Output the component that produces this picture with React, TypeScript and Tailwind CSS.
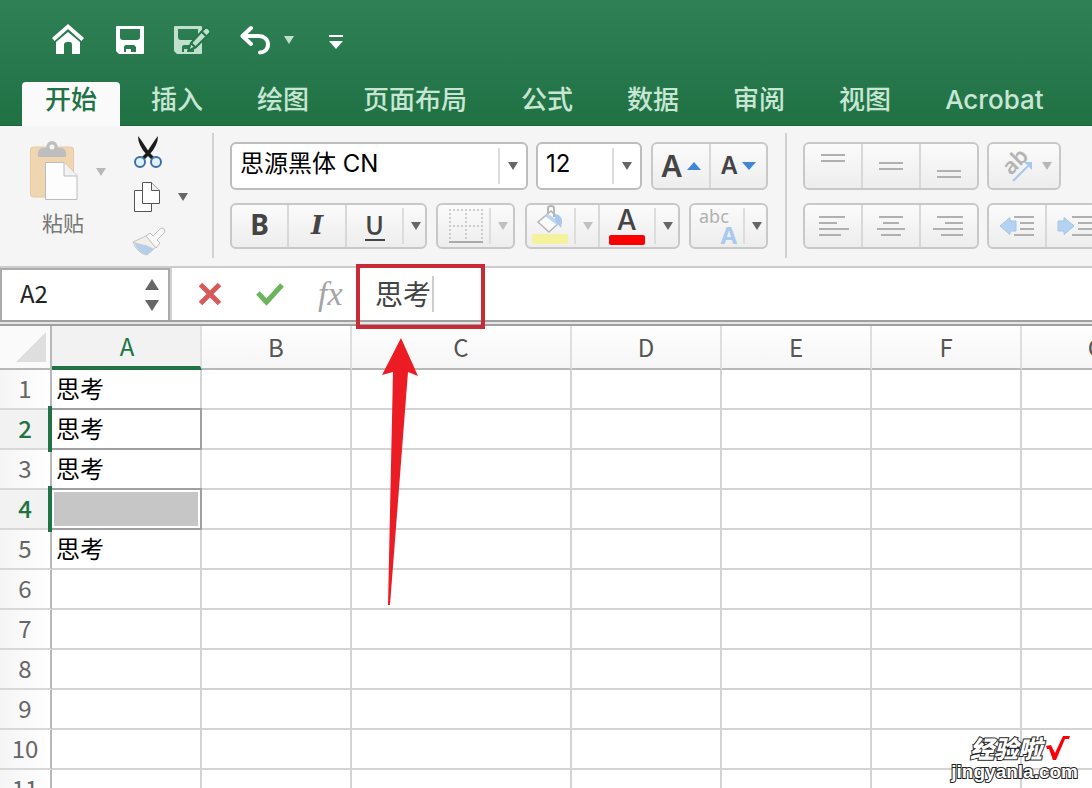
import { useState } from 'react';
import type { ReactNode } from 'react';

const tabs = ['开始', '插入', '绘图', '页面布局', '公式', '数据', '审阅', '视图', 'Acrobat'];

const columns = [
  { name: 'A', width: 150 },
  { name: 'B', width: 150 },
  { name: 'C', width: 220 },
  { name: 'D', width: 150 },
  { name: 'E', width: 150 },
  { name: 'F', width: 150 },
  { name: 'G', width: 150 },
];

const rows = [1, 2, 3, 4, 5, 6, 7, 8, 9, 10, 11];

const cells: Record<string, string> = { A1: '思考', A2: '思考', A3: '思考', A5: '思考' };

function Caret({ className = 'text-[#666666]' }: { className?: string }) {
  return (
    <svg width="10" height="8" viewBox="0 0 10 8" className={className} fill="currentColor">
      <path d="M0 0h10L5 8z" />
    </svg>
  );
}

function Separator() {
  return <span className="w-0.5 h-9 bg-[#dddddd]" />;
}

function Group({ children, className = '' }: { children: ReactNode; className?: string }) {
  return (
    <div
      className={`flex shrink-0 items-stretch rounded-md border-2 border-[#c8c8c8] bg-linear-to-b from-[#fbfbfb] to-[#ededed] ${className}`}
    >
      {children}
    </div>
  );
}

function Tool({
  label,
  children,
  className = '',
}: {
  label: string;
  children: ReactNode;
  className?: string;
}) {
  return (
    <button
      type="button"
      aria-label={label}
      title={label}
      className={`flex items-center justify-center ${className}`}
    >
      {children}
    </button>
  );
}

function Drop({ label, muted = false, className = 'flex-1' }: { label: string; muted?: boolean; className?: string }) {
  return (
    <button type="button" aria-label={label} title={label} className={`flex items-center gap-[7px] ${className}`}>
      <Separator />
      <Caret className={muted ? 'text-[#c0c0c0]' : 'text-[#666666]'} />
    </button>
  );
}

// each line is [x, width]
function Lines({ lines, top }: { lines: number[][]; top: number }) {
  return (
    <svg width="32" height="36" viewBox="0 0 32 36" fill="#b0b0b0">
      {lines.map(([x, width], i) => (
        <rect key={i} x={x} y={top + i * 6} width={width} height="2" />
      ))}
    </svg>
  );
}

function Indent({ right = false }: { right?: boolean }) {
  return (
    <svg width="36" height="24" viewBox="0 0 36 24">
      <g fill="#b0b0b0">
        <rect x="15" y="2" width="20" height="2" />
        <rect x="21" y="8" width="14" height="2" />
        <rect x="21" y="14" width="14" height="2" />
        <rect x="15" y="20" width="20" height="2" />
      </g>
      <path
        d={right ? 'M1 7h6V3.500l10 8.500-10 8.500V17H1z' : 'M17 7h-6V3.500L1 12l10 8.500V17h6z'}
        fill="#b5d2f2"
        stroke="#a3c3e8"
      />
    </svg>
  );
}

function Header() {
  const [active, setActive] = useState('开始');

  return (
    <header className="bg-linear-to-b from-[#308056] to-[#217346] to-90% border-b border-[#1d6039]">
      <div className="flex items-center gap-[30px] h-20 pl-[50px] text-white">
        <Tool label="主页" className="w-[34px]">
          <svg width="34" height="32" viewBox="0 0 34 32" fill="currentColor">
            <path d="M18 0 34 14l-2.600 3L18 5 4.600 17 2 14z" />
            <path d="M18 8 30 18v11.500q0 .5-.5.5H22V21q0-3-2-3h-3q-3 0-3 3v9H6.500q-.5 0-.5-.5V18z" />
          </svg>
        </Tool>
        <Tool label="保存" className="w-[30px] pl-0.5">
          <svg width="28" height="28" viewBox="0 0 28 28" fill="currentColor">
            <path
              d="M1 0h26q1 0 1 1v26q0 1-1 1H3l-3-3V1q0-1 1-1zM4 3v8q0 3 3 3h14q3 0 3-3V3zM8 26h2v-3h5v3h5v-5l-2-2h-8q-2 0-2 2z"
              fillRule="evenodd"
            />
          </svg>
        </Tool>
        <Tool label="另存为" className="w-9 text-[#bfe0cd]">
          <svg width="36" height="30" viewBox="0 0 36 30">
            <path
              d="M1 1h26q1 0 1 1v26q0 1-1 1H3l-3-3V2q0-1 1-1zM4 4v8q0 3 3 3h14q3 0 3-3V4zM8 27h2v-3h4v3h6v-5l-2-2h-8q-2 0-2 2z"
              fill="currentColor"
              fillRule="evenodd"
            />
            <path
              d="M14 26 17 18 31 3q2-1 4 1t1 4L22 22z"
              fill="currentColor"
              stroke="#26764a"
              strokeWidth="2"
              strokeLinejoin="round"
            />
            <path d="m27 6 5 5M17 18l5 5" stroke="#26764a" strokeWidth="2" />
          </svg>
        </Tool>
        <div className="flex items-center gap-3.5">
          <Tool label="撤消">
            <svg width="30" height="30" viewBox="0 0 30 30" fill="none" stroke="currentColor" strokeWidth="4">
              <path d="M11 3 2.500 11l8.500 8" strokeLinecap="round" strokeLinejoin="round" />
              <path d="M3 11h16c5 0 9 3.500 9 8.500s-4 8-8 8" strokeLinecap="round" />
            </svg>
          </Tool>
          <Tool label="撤消选项">
            <Caret className="text-[#bfe0cd]" />
          </Tool>
        </div>
        <Tool label="自定义快速访问工具栏" className="ml-1">
          <svg width="16" height="16" viewBox="0 0 16 16" fill="currentColor" className="mt-1">
            <path d="M1 1h14v2H1zM1 7h14L8 15z" />
          </svg>
        </Tool>
      </div>
      <nav className="flex gap-2 -mb-px pl-[22px] pt-0.5 text-[26px] leading-9 font-medium font-[Inter,'Noto_Sans_CJK_SC',sans-serif]">
        {tabs.map((tab) => (
          <button
            key={tab}
            type="button"
            onClick={() => setActive(tab)}
            className={`h-11 shrink-0 px-[23px] pb-2 rounded-t whitespace-nowrap ${
              tab === active ? 'bg-[#fafafa] text-[#217346]' : 'text-[#c8e6d4]'
            }`}
          >
            {tab}
          </button>
        ))}
      </nav>
    </header>
  );
}

function Clipboard() {
  return (
    <div className="flex shrink-0 w-[212px] h-full pl-[30px]">
      <div className="flex flex-col w-[76px] pt-3.5">
        <button type="button" className="flex items-start justify-between w-full" aria-label="粘贴">
          <svg width="50" height="62" viewBox="0 0 50 62">
            <rect x="0.500" y="7" width="43" height="50" rx="3" fill="#f0d6b0" stroke="#e3c9a4" />
            <path d="M8 17v-4q0-5 6-5h2q1-7 6-7t6 7h2q6 0 6 5v4z" fill="#bebebe" />
            <circle cx="22" cy="7" r="2.500" fill="#f5f5f5" />
            <path d="M15.500 22.500H34l13 13v24H15.500z" fill="#fdfdfd" stroke="#bcbcbc" />
            <path d="M34 22.500V36h13" fill="#f3f3f3" stroke="#bcbcbc" />
          </svg>
          <span className="pt-7">
            <Caret className="text-[#b8b8b8]" />
          </span>
        </button>
        <span className="pl-3 pt-1 text-[21px] leading-8 whitespace-nowrap text-[#777777]">粘贴</span>
      </div>
      <div className="flex flex-col items-start pl-[26px] pt-2">
        <Tool label="剪切" className="h-9">
          <svg width="32" height="34" viewBox="0 0 32 34">
            <path d="M6 1q2 2 11 16l6 6-2 3-7-7Q6 10 6 1z" fill="#1c1c1c" />
            <path d="M26 1q-2 2-11 16l-6 6 2 3 7-7Q26 10 26 1z" fill="#1c1c1c" />
            <circle cx="8" cy="27" r="5" fill="#dff1fd" stroke="#3d6fa8" strokeWidth="2" />
            <circle cx="24" cy="27" r="5" fill="#dff1fd" stroke="#3d6fa8" strokeWidth="2" />
          </svg>
        </Tool>
        <div className="flex items-center gap-4 h-[54px]">
          <Tool label="复制">
            <svg width="30" height="32" viewBox="0 0 30 32" stroke="#555555">
              <path d="M2.500 9.500h17v21h-17z" fill="#ffffff" />
              <path d="M10.500 1.500h9l8 8v13h-17z" fill="#ffffff" />
              <path d="M19.500 1.500v8h8" fill="#eeeeee" />
            </svg>
          </Tool>
          <Tool label="复制选项">
            <Caret />
          </Tool>
        </div>
        <Tool label="格式刷" className="h-9">
          <svg width="34" height="30" viewBox="0 0 34 30">
            <path d="M14 9 1 15c2 6 7 12 14 13l10-9z" fill="#f4eee6" stroke="#c4c4c4" />
            <path d="M2 15q8 3 12 3l8 4-7 6Q6 26 2 15z" fill="#b4cde8" />
            <path d="M14 9 18 6l3 3 7-7q2-2 4 0t0 4l-7 7 3 3-4 5z" fill="#f8f8f8" stroke="#bebebe" />
          </svg>
        </Tool>
      </div>
    </div>
  );
}

function FontTools() {
  return (
    <div className="flex flex-col shrink-0 gap-[13px] pl-4 pr-[17px]">
      <div className="flex h-12">
        <div className="relative flex items-center w-[298px] rounded-md border-2 border-[#bdbdbd] bg-white">
          <select
            aria-label="字体"
            defaultValue="cn"
            className="appearance-none w-full h-full pl-2 pb-1 text-2xl leading-8 font-[Inter,'Noto_Sans_CJK_SC',sans-serif] text-black bg-transparent"
          >
            <option value="cn">思源黑体 CN</option>
          </select>
          <span className="absolute right-2 flex items-center gap-2 pointer-events-none">
            <Separator />
            <Caret />
          </span>
        </div>
        <div className="relative flex items-center w-[106px] ml-2 rounded-md border-2 border-[#bdbdbd] bg-white">
          <select
            aria-label="字号"
            defaultValue="12"
            className="appearance-none w-full h-full pl-2 pb-1 text-2xl leading-8 font-[Inter,sans-serif] text-black bg-transparent"
          >
            <option value="12">12</option>
          </select>
          <span className="absolute right-2 flex items-center gap-2 pointer-events-none">
            <Separator />
            <Caret />
          </span>
        </div>
        <Group className="w-[117px] ml-[9px] divide-x-2 divide-[#d8d8d8] text-[#444444] font-semibold font-[Inter,sans-serif]">
          <Tool label="增大字号" className="flex-1 gap-1">
            <span className="text-[30px] leading-10">A</span>
            <svg width="14" height="8" viewBox="0 0 14 8">
              <path d="M0 8h14L7 0z" fill="#3f86d4" />
            </svg>
          </Tool>
          <Tool label="减小字号" className="flex-1 gap-1">
            <span className="text-2xl leading-10">A</span>
            <svg width="14" height="8" viewBox="0 0 14 8">
              <path d="M0 0h14L7 8z" fill="#3f86d4" />
            </svg>
          </Tool>
        </Group>
      </div>
      <div className="flex justify-between h-[46px]">
        <Group className="w-[197px] text-[#444444] text-[26px] leading-9">
          <Tool
            label="加粗"
            className="w-[57px] pb-1 text-[28px] font-bold font-['Noto_Sans',sans-serif] border-r-2 border-[#d8d8d8]"
          >
            B
          </Tool>
          <Tool
            label="倾斜"
            className="w-[58px] pb-0.5 font-bold italic font-['DejaVu_Serif',serif] border-r-2 border-[#d8d8d8]"
          >
            I
          </Tool>
          <Tool label="下划线" className="w-[55px] pb-0.5">
            <span className="w-5 h-8 border-b-2 border-[#444444] font-medium leading-[30px]">U</span>
          </Tool>
          <Drop label="下划线选项" />
        </Group>
        <Group className="w-[79px]">
          <Tool label="边框" className="w-[51px] pl-1">
            <svg width="36" height="36" viewBox="0 0 36 36" fill="none" stroke="#cccccc" strokeWidth="2">
              <path d="M1 2h34M1 18h34M2 1v31M18 1v31M34 1v31" strokeDasharray="2 2" />
              <path d="M1 34h34" stroke="#aaaaaa" />
            </svg>
          </Tool>
          <Drop label="边框选项" muted />
        </Group>
        <Group className="w-[155px]">
          <Tool label="填充颜色" className="w-[47px] pb-0.5">
            <svg width="38" height="40" viewBox="0 0 38 40">
              <rect x="1" y="29" width="36" height="10" rx="2" fill="#f4f29c" />
              <path d="M20 6 7 17l11 10 12-11z" fill="#fafafa" stroke="#b5b5b5" strokeWidth="1.500" />
              <path d="m14 11 3-2 12 8-3 3z" fill="#bcd5f0" />
              <path d="M23 9q8 0 8 8l-1 6-5-6z" fill="#a9c8ec" />
              <path d="M17 8V3q0-2 3-2t3 2v9" fill="none" stroke="#b5b5b5" strokeWidth="2" />
            </svg>
          </Tool>
          <Drop label="填充颜色选项" muted className="w-[26px] border-r-2 border-[#d8d8d8]" />
          <Tool label="字体颜色" className="w-[54px] flex-col pb-0.5">
            <span className="text-[28px] leading-[30px] font-medium font-[Inter,sans-serif] text-[#444444]">A</span>
            <span className="w-9 h-2.5 rounded-xs bg-[#fa0000]" />
          </Tool>
          <Drop label="字体颜色选项" />
        </Group>
        <Group className="w-[79px]">
          <Tool label="文本效果" className="w-[52px] flex-col">
            <span className="w-full pl-2 text-left text-lg leading-[22px] text-[#b0b0b0] font-['Noto_Sans',sans-serif]">
              abc
            </span>
            <span className="w-full pr-1.5 h-5 text-right text-2xl leading-4 font-bold font-['Noto_Sans',sans-serif] text-[#aac9ee]">
              A
            </span>
          </Tool>
          <Drop label="文本效果选项" />
        </Group>
      </div>
    </div>
  );
}

function AlignTools() {
  return (
    <div className="flex flex-col shrink-0 gap-[13px] pl-4">
      <div className="flex gap-2 h-12">
        <Group className="w-[176px] divide-x-2 divide-[#d8d8d8]">
          <Tool label="顶端对齐" className="flex-1">
            <Lines top={6} lines={[[4, 24], [4, 24]]} />
          </Tool>
          <Tool label="垂直居中" className="flex-1">
            <Lines top={14} lines={[[4, 24], [4, 24]]} />
          </Tool>
          <Tool label="底端对齐" className="flex-1">
            <Lines top={22} lines={[[4, 24], [4, 24]]} />
          </Tool>
        </Group>
        <Group className="w-[74px]">
          <Tool label="方向" className="flex-1 gap-2">
            <svg width="38" height="38" viewBox="0 0 38 38">
              <text
                x="15"
                y="29"
                transform="rotate(-45 15 29)"
                fontSize="22"
                fontWeight="600"
                fontFamily="Noto Sans, sans-serif"
                fill="#b4b4b4"
              >
                ab
              </text>
              <path d="M17 34 32 19" stroke="#a9c8ee" strokeWidth="2" />
              <path d="M28 15h8v8z" fill="#a9c8ee" />
            </svg>
            <Caret className="text-[#b8b8b8]" />
          </Tool>
        </Group>
      </div>
      <div className="flex gap-2 h-[46px]">
        <Group className="w-[176px] divide-x-2 divide-[#d8d8d8]">
          <Tool label="左对齐" className="flex-1">
            <Lines top={8} lines={[[2, 26], [2, 18], [2, 30], [2, 22]]} />
          </Tool>
          <Tool label="居中" className="flex-1">
            <Lines top={8} lines={[[4, 24], [8, 16], [2, 28], [6, 20]]} />
          </Tool>
          <Tool label="右对齐" className="flex-1">
            <Lines top={8} lines={[[4, 26], [12, 18], [0, 30], [8, 22]]} />
          </Tool>
        </Group>
        <Group className="w-[118px] divide-x-2 divide-[#d8d8d8]">
          <Tool label="减少缩进量" className="flex-1">
            <Indent />
          </Tool>
          <Tool label="增加缩进量" className="flex-1">
            <Indent right />
          </Tool>
        </Group>
      </div>
    </div>
  );
}

function FormulaBar() {
  const [value, setValue] = useState('思考');

  return (
    <div className="flex shrink-0 items-stretch h-[54px] border-b-2 border-[#a0a0a0] bg-white">
      <div className="flex shrink-0 w-[170px] border-2 border-b-0 border-[#ababab]">
        <input
          aria-label="名称框"
          defaultValue="A2"
          className="shrink-0 w-[134px] pl-[18px] pb-1 text-2xl leading-8 text-[#222222] outline-none"
        />
        <div className="flex flex-col items-center justify-center gap-2.5 w-8">
          <button type="button" aria-label="上一个" className="block">
            <svg width="14" height="11" viewBox="0 0 14 11" fill="#666666">
              <path d="M0 11h14L7 0z" />
            </svg>
          </button>
          <button type="button" aria-label="下一个" className="block">
            <svg width="14" height="11" viewBox="0 0 14 11" fill="#666666">
              <path d="M0 0h14L7 11z" />
            </svg>
          </button>
        </div>
      </div>
      <div className="flex shrink-0 items-center pl-[26px] gap-[34px] w-[193px] border-l-2 border-[#d0d0d0]">
        <Tool label="取消">
          <svg width="24" height="24" viewBox="0 0 24 24" stroke="#d65a59" strokeWidth="5">
            <path d="m2.500 2.500 19 19m0-19-19 19" />
          </svg>
        </Tool>
        <Tool label="输入">
          <svg width="28" height="24" viewBox="0 0 28 24" fill="none" stroke="#6bb55c" strokeWidth="5">
            <path d="m2 11 8.500 9L26 3" />
          </svg>
        </Tool>
        <Tool label="插入函数">
          <span className="text-[34px] leading-9 italic font-['Liberation_Serif',serif] text-[#a4a4a4]">fx</span>
        </Tool>
      </div>
      {/* boxed area that the arrow points at */}
      <div className="relative flex flex-1 items-center pl-3">
        <input
          aria-label="编辑栏"
          value={value}
          onChange={(e) => setValue(e.target.value)}
          className="w-[57px] pb-0.5 text-[28px] leading-10 text-[#444444] outline-none"
        />
        <span className="w-0.5 h-9 bg-[#cccccc]" />
        <span className="absolute z-10 -left-[7px] -top-1 w-[129px] h-[65px] border-4 border-[#c92a38] pointer-events-none" />
        <svg
          width="38"
          height="270"
          viewBox="0 0 38 270"
          className="absolute z-10 left-[18px] top-[69px] pointer-events-none"
        >
          <path d="M20 1 37 39 27 35 9 268H7L12 35 1 38z" fill="#ec1c24" />
        </svg>
      </div>
    </div>
  );
}

function Sheet() {
  return (
    <table className="table-fixed border-separate border-spacing-0 w-[1172px] text-2xl leading-8">
      <colgroup>
        <col className="w-[52px]" />
        {columns.map((column) => (
          <col key={column.name} style={{ width: column.width }} />
        ))}
      </colgroup>
      <thead>
        <tr className="h-11 text-[#555555]">
          <th className="p-0 border-r-2 border-b-2 border-[#b8b8b8] bg-[#fafafa]" aria-label="全选">
            <svg width="30" height="30" viewBox="0 0 30 30" className="ml-4">
              <path d="M30 0v30H0z" fill="#dedede" />
            </svg>
          </th>
          {columns.map((column) => (
            <th
              key={column.name}
              scope="col"
              className={
                column.name === 'A'
                  ? 'p-0 pl-0.5 border-b-4 border-r-2 border-b-[#217346] border-r-[#e0e0e0] bg-[#f2f2f2] font-normal text-[#217346]'
                  : 'p-0 border-b-2 border-r-2 border-b-[#b8b8b8] border-r-[#dedede] bg-linear-to-b from-[#fefefe] to-[#f6f6f6] font-normal'
              }
            >
              {column.name}
            </th>
          ))}
        </tr>
      </thead>
      <tbody>
        {rows.map((row) => {
          const selected = row === 2 || row === 4;
          return (
            <tr key={row} className="h-10">
              <th
                scope="row"
                className={`relative p-0 pb-0.5 border-r-2 border-b-2 border-r-[#b8b8b8] border-b-[#d8d8d8] ${
                  selected
                    ? 'bg-[#f2f2f2] font-medium text-[#217346]'
                    : 'bg-linear-to-r from-[#f5f5f5] to-[#ffffff] font-normal text-[#666666]'
                }`}
              >
                {row}
                {selected && <span className="absolute z-10 -right-0.5 -top-1 -bottom-1 w-1 bg-[#217346]" />}
              </th>
              {columns.map((column) => (
                <td
                  key={column.name}
                  className="relative p-0 pl-1 pb-0.5 border-r-2 border-b-2 border-[#d4d4d4] bg-white text-black"
                >
                  {cells[column.name + row]}
                  {column.name === 'A' && selected && (
                    <span className="absolute left-0 -right-0.5 -top-0.5 -bottom-0.5 border-2 border-l-0 border-[#a0a0a0]" />
                  )}
                  {column.name === 'A' && row === 4 && <span className="absolute inset-0.5 bg-[#c6c6c6]" />}
                </td>
              ))}
            </tr>
          );
        })}
      </tbody>
    </table>
  );
}

function Watermark() {
  return (
    <div className="absolute right-3.5 bottom-1.5 flex flex-col items-end text-white [-webkit-text-stroke:2px_#222222] [paint-order:stroke_fill] pointer-events-none">
      <div className="flex items-center gap-1 pr-2">
        <span className="text-2xl leading-7 font-black italic">经验啦</span>
        <svg width="24" height="24" viewBox="0 0 24 24" fill="#fb0007">
          <path d="m0 10 5-1 4 8L17 0h7l-1 3h-4L10 24H7L3 13H1z" />
        </svg>
      </div>
      <span className="text-[19px] leading-5 font-bold font-['Liberation_Sans',sans-serif]">jingyanla.com</span>
    </div>
  );
}

export default function App() {
  return (
    <div className="relative flex flex-col h-screen overflow-hidden bg-white font-['Noto_Sans_CJK_SC',sans-serif]">
      <Header />
      <div className="flex shrink-0 items-center h-[142px] pb-px border-b-2 border-[#cccccc] bg-[#f5f5f5] overflow-hidden">
        <Clipboard />
        <span className="shrink-0 w-0.5 h-[125px] bg-[#d2d2d2]" />
        <FontTools />
        <span className="shrink-0 w-0.5 h-[125px] bg-[#d2d2d2]" />
        <AlignTools />
      </div>
      <FormulaBar />
      <div className="shrink-0 h-1 bg-[#e6e6e6] border-b-2 border-[#a0a0a0]" />
      <div className="flex-1 overflow-hidden">
        <Sheet />
      </div>
      <Watermark />
    </div>
  );
}
